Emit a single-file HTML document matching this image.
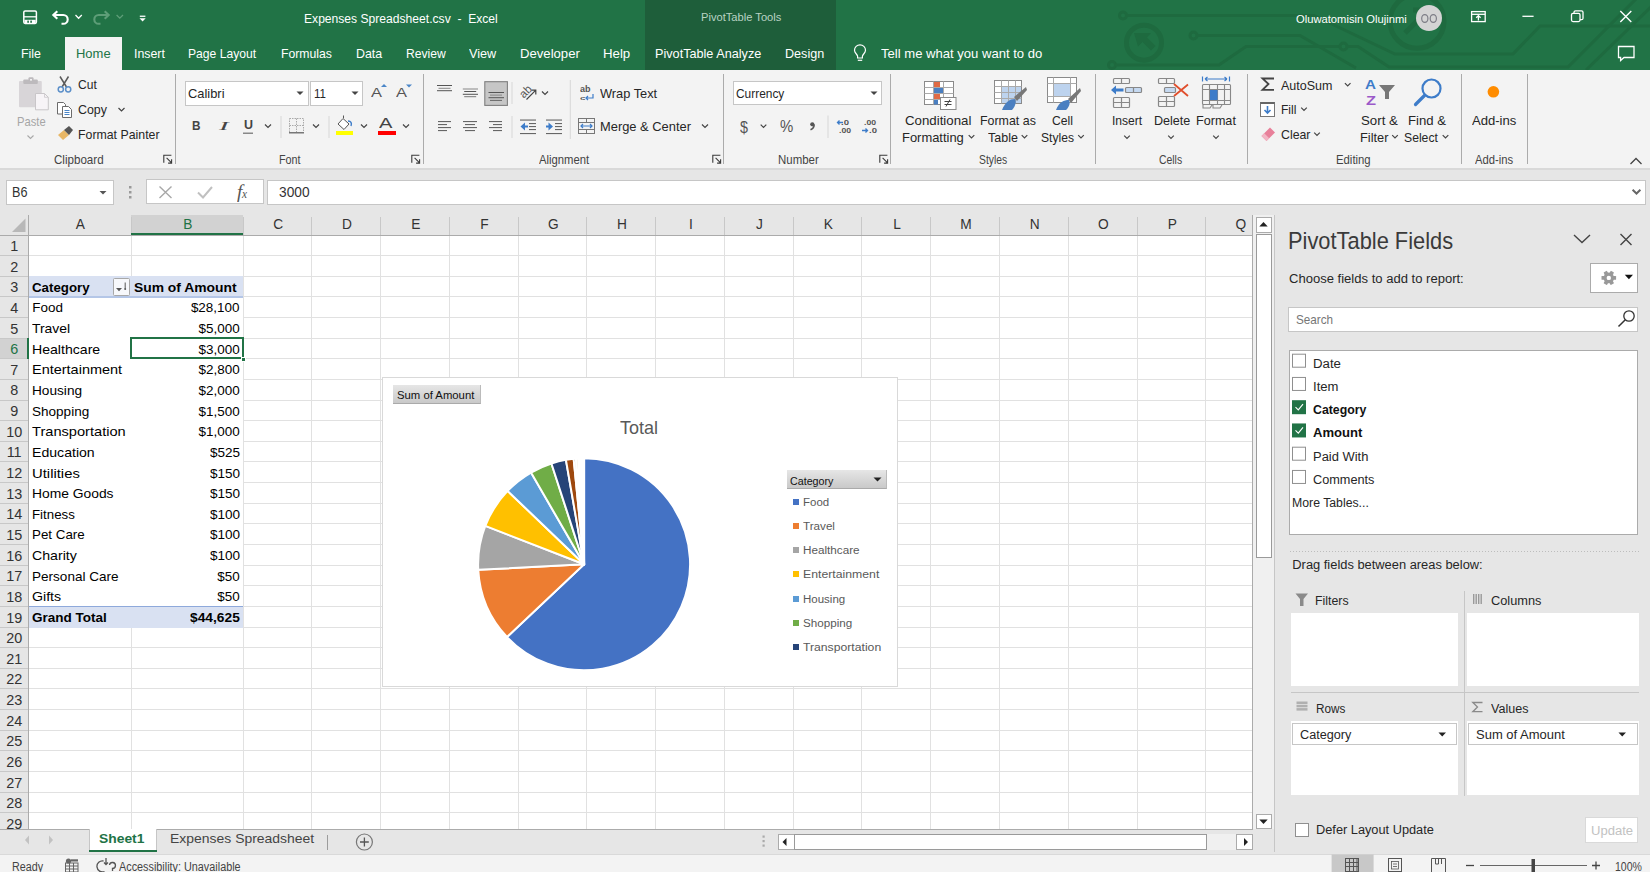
<!DOCTYPE html><html><head><meta charset="utf-8"><title>Excel</title><style>
html,body{margin:0;padding:0;}
body{width:1650px;height:872px;overflow:hidden;position:relative;background:#fff;font-family:"Liberation Sans",sans-serif;}
.t{position:absolute;white-space:pre;line-height:20px;height:20px;transform-origin:0 50%;font-family:"Liberation Sans",sans-serif;}
.r{position:absolute;display:block;}
</style></head><body><div class="r" style="left:0.00px;top:0.00px;width:1650.00px;height:70.00px;background:#217346;"></div><svg class="r" style="left:1080px;top:0px;" width="570" height="70" viewBox="0 0 570 70">
<g fill="none" stroke="#1e6a3f" stroke-width="3">
<circle cx="43" cy="15.5" r="3.5"/>
<path d="M46.5 15.5 H234 L315 54 H433 L460 26 H572"/>
<circle cx="64" cy="42.7" r="17.5" stroke-width="5"/>
<circle cx="113.5" cy="35.5" r="3.5"/>
<path d="M117 35.5 H220 L276 68"/>
<circle cx="32" cy="65" r="3.5"/>
<path d="M35.5 65 H139 L166 46.5 H260"/>
<circle cx="263.5" cy="46.5" r="3.5"/>
<path d="M267 46.5 H278 L309 67 H488 L556 -1"/>
<circle cx="337" cy="21.3" r="27" stroke-width="5"/>
<path d="M325 33 L346 12 M333 10 H348 V25" stroke-width="5"/>
<path d="M506 70 L572 6"/>
</g>
<g fill="#1e6a3f"><path d="M54 33 L71 33 L67 37.5 L75.5 46 L71 50.5 L62.5 42 L58 46.5 Z"/></g>
</svg><div class="r" style="left:645.00px;top:0.00px;width:191.00px;height:70.00px;background:#1e5e3a;"></div><div class="t" style="left:700.70px;top:6.90px;font-size:10.97px;color:#b9d3c3;transform:scaleX(1.016);">PivotTable Tools</div><svg class="r" style="left:0px;top:0px;" width="200" height="40" viewBox="0 0 200 40">
<rect x="23.8" y="11" width="12.6" height="12.4" rx="1.3" fill="none" stroke="#fff" stroke-width="1.5"/>
<path d="M24 16.8 H36.2" stroke="#fff" stroke-width="1.3"/>
<rect x="24.5" y="19.8" width="11.2" height="3.6" fill="#fff"/>
<rect x="27.3" y="20.6" width="1.6" height="2.2" fill="#217346"/><rect x="30.3" y="20.6" width="1.6" height="2.2" fill="#217346"/>
<g fill="none" stroke="#fff" stroke-width="2.1">
<path d="M53.5 15 H63.3 A4.4 4.4 0 0 1 63.3 23.8 H61.5"/>
<path d="M57.3 11.2 L53.3 15 L57.3 18.8"/>
</g>
<path d="M75.5 15 L78.6 18.2 L81.8 15" fill="none" stroke="#fff" stroke-width="1.3"/>
<g fill="none" stroke="#5e9e78" stroke-width="2.1">
<path d="M108.5 15 H98.7 A4.4 4.4 0 0 0 98.7 23.8 H100.5"/>
<path d="M104.7 11.2 L108.7 15 L104.7 18.8"/>
</g>
<path d="M116.6 15 L119.8 18.2 L123 15" fill="none" stroke="#5e9e78" stroke-width="1.3"/>
<rect x="139.8" y="15.6" width="5.6" height="1.3" fill="#fff"/>
<path d="M139.5 18.3 H145.7 L142.6 21.6 Z" fill="#fff"/>
</svg><div class="t" style="left:304.20px;top:9.03px;font-size:13.03px;color:#ffffff;transform:scaleX(0.930);">Expenses Spreadsheet.csv  -  Excel</div><div class="t" style="left:1296.00px;top:8.91px;font-size:11.52px;color:#ffffff;transform:scaleX(0.973);">Oluwatomisin Olujinmi</div><svg class="r" style="left:1416px;top:5px;" width="26" height="26" viewBox="0 0 26 26"><circle cx="13" cy="13" r="13" fill="#d4d4d4"/>
<g fill="none" stroke="#7d7d86" stroke-width="1.2"><ellipse cx="8.8" cy="13.5" rx="3.1" ry="3.9"/><ellipse cx="17.3" cy="13.5" rx="3.1" ry="3.9"/></g></svg><svg class="r" style="left:0px;top:0px;" width="1650" height="70" viewBox="0 0 1650 70"><g fill="none" stroke="#fff" stroke-width="1.3">
<rect x="1471.6" y="11.6" width="13.6" height="10"/>
<path d="M1471.6 14.3 H1485.2"/>
<path d="M1478.4 20.5 V15.7 M1476.2 17.8 L1478.4 15.6 L1480.6 17.8"/>
<path d="M1522.4 16.3 H1533.6"/>
<rect x="1571.5" y="13.3" width="8.5" height="8.3" rx="1.5"/>
<path d="M1574 13.3 V12.3 A1.5 1.5 0 0 1 1575.5 10.8 H1581.5 A1.5 1.5 0 0 1 1583 12.3 V18.2 A1.5 1.5 0 0 1 1581.5 19.7 H1580"/>
<path d="M1620.3 11 L1631.3 22 M1631.3 11 L1620.3 22" stroke-width="1.4"/>
<path d="M1618.5 46.5 H1634 V57.5 H1624 L1620.6 60.5 V57.5 H1618.5 Z"/>
</g></svg><div class="r" style="left:65.00px;top:37.00px;width:57.00px;height:33.00px;background:#f3f3f3;"></div><div class="t" style="left:21.30px;top:43.83px;font-size:12.76px;color:#ffffff;transform:scaleX(0.971);">File</div><div class="t" style="left:76.00px;top:43.83px;font-size:12.76px;color:#217346;transform:scaleX(1.018);">Home</div><div class="t" style="left:134.00px;top:43.83px;font-size:12.76px;color:#ffffff;transform:scaleX(0.969);">Insert</div><div class="t" style="left:188.30px;top:43.83px;font-size:12.76px;color:#ffffff;transform:scaleX(0.951);">Page Layout</div><div class="t" style="left:280.50px;top:43.83px;font-size:12.76px;color:#ffffff;transform:scaleX(0.959);">Formulas</div><div class="t" style="left:355.60px;top:43.83px;font-size:12.76px;color:#ffffff;transform:scaleX(0.974);">Data</div><div class="t" style="left:406.00px;top:43.83px;font-size:12.76px;color:#ffffff;transform:scaleX(0.952);">Review</div><div class="t" style="left:469.30px;top:43.83px;font-size:12.76px;color:#ffffff;transform:scaleX(0.993);">View</div><div class="t" style="left:520.00px;top:43.83px;font-size:12.76px;color:#ffffff;transform:scaleX(1.029);">Developer</div><div class="t" style="left:602.70px;top:43.83px;font-size:12.76px;color:#ffffff;transform:scaleX(1.038);">Help</div><div class="t" style="left:655.00px;top:43.83px;font-size:12.76px;color:#ffffff;transform:scaleX(0.993);">PivotTable Analyze</div><div class="t" style="left:785.00px;top:43.83px;font-size:12.76px;color:#ffffff;transform:scaleX(0.987);">Design</div><div class="t" style="left:880.70px;top:43.83px;font-size:12.76px;color:#ffffff;transform:scaleX(1.025);">Tell me what you want to do</div><svg class="r" style="left:0px;top:0px;" width="900" height="70" viewBox="0 0 900 70"><g fill="none" stroke="#fff" stroke-width="1.2">
<path d="M857.6 58 V56.3 C857.6 54.6 854.5 53 854.5 50.3 A5.5 5.5 0 0 1 865.5 50.3 C865.5 53 862.4 54.6 862.4 56.3 V58 Z"/>
<path d="M857.8 60.3 H862.2"/></g></svg><div class="r" style="left:0.00px;top:70.00px;width:1650.00px;height:98.00px;background:#f3f3f3;"></div><div class="r" style="left:0.00px;top:168.00px;width:1650.00px;height:1.50px;background:#d9d9d9;"></div><div class="r" style="left:175.30px;top:74.00px;width:1.00px;height:89.50px;background:#ababab;"></div><div class="r" style="left:423.00px;top:74.00px;width:1.00px;height:89.50px;background:#ababab;"></div><div class="r" style="left:723.10px;top:74.00px;width:1.00px;height:89.50px;background:#ababab;"></div><div class="r" style="left:890.10px;top:74.00px;width:1.00px;height:89.50px;background:#ababab;"></div><div class="r" style="left:1095.10px;top:74.00px;width:1.00px;height:89.50px;background:#ababab;"></div><div class="r" style="left:1246.80px;top:74.00px;width:1.00px;height:89.50px;background:#ababab;"></div><div class="r" style="left:1461.10px;top:74.00px;width:1.00px;height:89.50px;background:#ababab;"></div><div class="r" style="left:1526.80px;top:74.00px;width:1.00px;height:89.50px;background:#ababab;"></div><div class="t" style="left:16.60px;top:111.73px;font-size:12.76px;color:#a6a6a6;transform:scaleX(0.878);">Paste</div><div class="t" style="left:77.60px;top:75.24px;font-size:13.17px;color:#262626;transform:scaleX(0.917);">Cut</div><div class="t" style="left:77.60px;top:100.04px;font-size:13.17px;color:#262626;transform:scaleX(0.942);">Copy</div><div class="t" style="left:77.80px;top:124.74px;font-size:13.17px;color:#262626;transform:scaleX(0.937);">Format Painter</div><div class="t" style="left:53.60px;top:149.62px;font-size:12.35px;color:#444444;transform:scaleX(0.939);">Clipboard</div><div class="r" style="left:185.30px;top:81.30px;width:123.40px;height:24.30px;background:#fff;border:1px solid #c6c6c6;box-sizing:border-box;"></div><div class="r" style="left:310.40px;top:81.30px;width:53.10px;height:24.30px;background:#fff;border:1px solid #c6c6c6;box-sizing:border-box;"></div><div class="t" style="left:187.80px;top:83.54px;font-size:13.17px;color:#262626;transform:scaleX(0.979);">Calibri</div><div class="t" style="left:313.70px;top:83.54px;font-size:13.17px;color:#262626;transform:scaleX(0.876);">11</div><div class="t" style="left:370.50px;top:82.73px;font-size:13.03px;color:#555;transform:scaleX(1.264);">A</div><div class="t" style="left:396.00px;top:83.23px;font-size:13.03px;color:#555;transform:scaleX(1.264);">A</div><div class="t" style="left:191.50px;top:116.23px;font-size:13.03px;color:#444;font-weight:bold;transform:scaleX(0.904);">B</div><div class="t" style="left:218.50px;top:116.24px;font-size:13.44px;color:#444;font-style:italic;transform:scaleX(2.162);font-family:'Liberation Serif',serif;">I</div><div class="t" style="left:243.50px;top:115.22px;font-size:12.35px;color:#444;font-weight:bold;transform:scaleX(1.011);">U</div><div class="t" style="left:378.50px;top:113.75px;font-size:13.72px;color:#444;transform:scaleX(1.467);">A</div><div class="t" style="left:279.25px;top:149.72px;font-size:12.35px;color:#444444;transform:scaleX(0.874);">Font</div><div class="t" style="left:580.00px;top:79.65px;font-size:8.23px;color:#555;transform:scaleX(1.099);font-weight:bold;">ab</div><div class="t" style="left:579.50px;top:87.61px;font-size:6.17px;color:#555;transform:scaleX(1.613);font-weight:bold;">c</div><div class="t" style="left:599.50px;top:83.74px;font-size:13.17px;color:#262626;transform:scaleX(0.973);">Wrap Text</div><div class="t" style="left:599.50px;top:116.54px;font-size:13.17px;color:#262626;transform:scaleX(0.979);">Merge &amp; Center</div><div class="t" style="left:539.00px;top:149.72px;font-size:12.35px;color:#444444;transform:scaleX(0.914);">Alignment</div><div class="r" style="left:732.60px;top:81.20px;width:149.40px;height:24.30px;background:#fff;border:1px solid #c6c6c6;box-sizing:border-box;"></div><div class="t" style="left:735.60px;top:83.54px;font-size:13.17px;color:#262626;transform:scaleX(0.905);">Currency</div><div class="t" style="left:740.30px;top:116.60px;font-size:16.46px;color:#555;transform:scaleX(0.870);">$</div><div class="t" style="left:780.00px;top:116.80px;font-size:16.74px;color:#555;transform:scaleX(0.892);">%</div><div class="t" style="left:840.50px;top:112.64px;font-size:7.54px;color:#555;transform:scaleX(1.270);font-weight:bold;">.0</div><div class="t" style="left:838.50px;top:120.64px;font-size:7.54px;color:#555;transform:scaleX(1.154);font-weight:bold;">.00</div><div class="t" style="left:864.00px;top:112.64px;font-size:7.54px;color:#555;transform:scaleX(1.154);font-weight:bold;">.00</div><div class="t" style="left:868.50px;top:120.64px;font-size:7.54px;color:#555;transform:scaleX(1.270);font-weight:bold;">.0</div><div class="t" style="left:777.75px;top:149.72px;font-size:12.35px;color:#444444;transform:scaleX(0.927);">Number</div><div class="t" style="left:905.00px;top:111.24px;font-size:13.17px;color:#262626;transform:scaleX(1.008);">Conditional</div><div class="t" style="left:901.50px;top:128.24px;font-size:13.17px;color:#262626;transform:scaleX(0.983);">Formatting</div><div class="t" style="left:980.00px;top:111.24px;font-size:13.17px;color:#262626;transform:scaleX(0.943);">Format as</div><div class="t" style="left:987.50px;top:128.24px;font-size:13.17px;color:#262626;transform:scaleX(0.949);">Table</div><div class="t" style="left:1052.00px;top:111.24px;font-size:13.17px;color:#262626;transform:scaleX(0.925);">Cell</div><div class="t" style="left:1040.50px;top:128.24px;font-size:13.17px;color:#262626;transform:scaleX(0.919);">Styles</div><div class="t" style="left:978.50px;top:149.72px;font-size:12.35px;color:#444444;transform:scaleX(0.836);">Styles</div><div class="t" style="left:1112.30px;top:111.24px;font-size:13.17px;color:#262626;transform:scaleX(0.918);">Insert</div><div class="t" style="left:1153.50px;top:111.24px;font-size:13.17px;color:#262626;transform:scaleX(0.955);">Delete</div><div class="t" style="left:1196.00px;top:111.24px;font-size:13.17px;color:#262626;transform:scaleX(0.957);">Format</div><div class="t" style="left:1159.20px;top:149.72px;font-size:12.35px;color:#444444;transform:scaleX(0.842);">Cells</div><div class="t" style="left:1280.70px;top:75.54px;font-size:13.17px;color:#262626;transform:scaleX(0.950);">AutoSum</div><div class="t" style="left:1280.70px;top:100.04px;font-size:13.17px;color:#262626;transform:scaleX(0.917);">Fill</div><div class="t" style="left:1280.70px;top:124.74px;font-size:13.17px;color:#262626;transform:scaleX(0.937);">Clear</div><div class="t" style="left:1365.00px;top:74.74px;font-size:13.44px;color:#3d7cc9;font-weight:bold;transform:scaleX(1.134);">A</div><div class="t" style="left:1365.50px;top:91.24px;font-size:13.44px;color:#9b59c9;font-weight:bold;transform:scaleX(1.220);">Z</div><div class="t" style="left:1361.00px;top:111.24px;font-size:13.17px;color:#262626;transform:scaleX(1.008);">Sort &amp;</div><div class="t" style="left:1359.50px;top:128.24px;font-size:13.17px;color:#262626;transform:scaleX(0.973);">Filter</div><div class="t" style="left:1408.00px;top:111.24px;font-size:13.17px;color:#262626;">Find &amp;</div><div class="t" style="left:1404.00px;top:128.24px;font-size:13.17px;color:#262626;transform:scaleX(0.926);">Select</div><div class="t" style="left:1335.75px;top:149.72px;font-size:12.35px;color:#444444;transform:scaleX(0.918);">Editing</div><div class="t" style="left:1472.00px;top:111.24px;font-size:13.17px;color:#262626;transform:scaleX(0.993);">Add-ins</div><div class="t" style="left:1475.00px;top:149.72px;font-size:12.35px;color:#444444;transform:scaleX(0.911);">Add-ins</div><svg class="r" style="left:0px;top:0px;" width="1650" height="172" viewBox="0 0 1650 172"><g>
<rect x="19" y="81" width="22.8" height="26.3" rx="1" fill="#d8d5d8"/>
<rect x="23.3" y="79.5" width="14.5" height="4.5" rx="1" fill="#bdbabd"/>
<rect x="28.5" y="77.2" width="5" height="4" rx="1" fill="#bdbabd"/><rect x="30" y="79" width="2" height="1.6" fill="#f3f3f3"/>
<path d="M35.5 93.5 H44.5 L48.3 97.3 V109.8 H35.5 Z" fill="#f7f4f7" stroke="#c9c6c9" stroke-width="1"/>
<path d="M44.5 93.5 V97.3 H48.3" fill="none" stroke="#c9c6c9" stroke-width="0.8"/>
</g><path d="M27.5 135.5 L30.5 138.5 L33.5 135.5" fill="none" stroke="#a8a8a8" stroke-width="1.1"/><g fill="none" stroke="#5a5a5a" stroke-width="1.5"><path d="M60 76.5 L66.5 87 M68.5 76.5 L62 87"/></g>
<g fill="none" stroke="#5b8fc9" stroke-width="1.5"><circle cx="60.8" cy="89.3" r="2.6"/><circle cx="68.2" cy="89.3" r="2.6"/></g><g fill="#fff" stroke="#6b6b6b" stroke-width="1"><path d="M57.5 102.5 H63.5 L65.5 104.5 V114 H57.5 Z"/>
<path d="M62.5 106.5 H68.5 L71.5 109.5 V117.5 H62.5 Z"/></g>
<g stroke="#4a86c8" stroke-width="1"><path d="M64.5 110.5 H69.5 M64.5 112.5 H69.5 M64.5 114.5 H69.5"/></g><path d="M118.5 108.0 L121.5 111.0 L124.5 108.0" fill="none" stroke="#444" stroke-width="1.2"/><path d="M58 135 L64 130 L69 135 L63 140 Z" fill="#e8b766"/>
<path d="M64 130 L69 126 L73 130 L69 135 Z" fill="#555"/><g fill="none" stroke="#3a3a3a" stroke-width="1.1"><path d="M163.79999999999998 162.8 V155.3 H171.4"/><path d="M166.6 157.8 L171.6 162.8 M171.6 159.3 V163.10000000000002 H168.1"/></g><g fill="none" stroke="#3a3a3a" stroke-width="1.1"><path d="M411.8 162.8 V155.3 H419.40000000000003"/><path d="M414.6 157.8 L419.6 162.8 M419.6 159.3 V163.10000000000002 H416.1"/></g><g fill="none" stroke="#3a3a3a" stroke-width="1.1"><path d="M712.8000000000001 162.8 V155.3 H720.4"/><path d="M715.6 157.8 L720.6 162.8 M720.6 159.3 V163.10000000000002 H717.1"/></g><g fill="none" stroke="#3a3a3a" stroke-width="1.1"><path d="M879.8000000000001 162.8 V155.3 H887.4"/><path d="M882.6 157.8 L887.6 162.8 M887.6 159.3 V163.10000000000002 H884.1"/></g><path d="M296.5 91.5 H303.5 L300 95 Z" fill="#444"/><path d="M351.5 91.5 H358.5 L355 95 Z" fill="#444"/><path d="M381 87 L384 84 L387 87 Z" fill="#4a86c8"/><path d="M406 84.5 H412 L409 87.5 Z" fill="#4a86c8"/><rect x="243" y="132.5" width="10" height="1.5" fill="#888"/><path d="M265 124.5 L268 127.5 L271 124.5" fill="none" stroke="#444" stroke-width="1.2"/><rect x="280.5" y="116" width="1" height="22" fill="#d8d8d8"/><rect x="328.5" y="116" width="1" height="22" fill="#d8d8d8"/><g fill="none" stroke="#aaa" stroke-width="1" stroke-dasharray="1.5 1"><rect x="289.5" y="118.5" width="14" height="14"/><path d="M296.5 118.5 V132.5 M289.5 125.5 H303.5"/></g><rect x="289" y="132" width="15" height="1.5" fill="#777"/><path d="M313 124.5 L316 127.5 L319 124.5" fill="none" stroke="#444" stroke-width="1.2"/><path d="M338 124 L343 118.5 L349 124 L344 129.5 Z" fill="#fff" stroke="#555" stroke-width="1"/><path d="M343.5 118 V115.5" stroke="#555" stroke-width="1"/><path d="M348 121 C351 121 352 123 351 126" fill="none" stroke="#3d7cc9" stroke-width="1.4"/><rect x="336" y="131" width="17" height="4" fill="#ffff00"/><path d="M361 124.5 L364 127.5 L367 124.5" fill="none" stroke="#444" stroke-width="1.2"/><rect x="378" y="131" width="18" height="4" fill="#ff0000"/><path d="M403 124.5 L406 127.5 L409 124.5" fill="none" stroke="#444" stroke-width="1.2"/><rect x="437" y="85" width="15" height="1" fill="#555"/><rect x="438.5" y="87.8" width="12.0" height="1" fill="#888"/><rect x="437" y="90.2" width="15" height="1" fill="#555"/><rect x="462.8" y="88.5" width="15.199999999999989" height="1" fill="#888"/><rect x="464.2" y="91" width="12.0" height="1" fill="#555"/><rect x="462.8" y="93.8" width="15.199999999999989" height="1" fill="#555"/><rect x="464.2" y="96.2" width="12.0" height="1" fill="#777"/><rect x="484.8" y="81.7" width="22.6" height="23.7" fill="#c6c6c6" stroke="#7f7f7f" stroke-width="1.1"/><rect x="488.5" y="92" width="15.5" height="1" fill="#555"/><rect x="490" y="94.6" width="12" height="1" fill="#888"/><rect x="488.5" y="97.2" width="15.5" height="1" fill="#555"/><rect x="490" y="99.9" width="12" height="1" fill="#666"/><rect x="511.5" y="82" width="1" height="22" fill="#d8d8d8"/><rect x="511.5" y="116" width="1" height="22" fill="#d8d8d8"/><text x="525.5" y="95.5" text-anchor="middle" font-family="Liberation Sans" font-size="11.5" fill="#555" transform="rotate(-45 525.5 91.5)">ab</text><path d="M526.5 99.5 L535.8 90.2 M531.5 90.2 H535.8 V94.5" fill="none" stroke="#444" stroke-width="1.2"/><path d="M542 91.5 L545 94.5 L548 91.5" fill="none" stroke="#444" stroke-width="1.2"/><rect x="438" y="121" width="13" height="1.1" fill="#666"/><rect x="438" y="124" width="9" height="1.1" fill="#666"/><rect x="438" y="127" width="13" height="1.1" fill="#666"/><rect x="438" y="130" width="9" height="1.1" fill="#666"/><rect x="463" y="121" width="14" height="1.1" fill="#666"/><rect x="465" y="124" width="10" height="1.1" fill="#666"/><rect x="463" y="127" width="14" height="1.1" fill="#666"/><rect x="465" y="130" width="10" height="1.1" fill="#666"/><rect x="489" y="121" width="13" height="1.1" fill="#666"/><rect x="493" y="124" width="9" height="1.1" fill="#666"/><rect x="489" y="127" width="13" height="1.1" fill="#666"/><rect x="493" y="130" width="9" height="1.1" fill="#666"/><rect x="520" y="119.5" width="16" height="1.1" fill="#666"/><rect x="520" y="133" width="16" height="1.1" fill="#666"/><rect x="529" y="123" width="7" height="1.1" fill="#666"/><rect x="529" y="126" width="7" height="1.1" fill="#666"/><rect x="529" y="129" width="7" height="1.1" fill="#666"/><path d="M520.5 126.5 L525 122.5 V125.5 H528 V127.5 H525 V130.5 Z" fill="#3d7cc9"/><rect x="546" y="119.5" width="16" height="1.1" fill="#666"/><rect x="546" y="133" width="16" height="1.1" fill="#666"/><rect x="555" y="123" width="7" height="1.1" fill="#666"/><rect x="555" y="126" width="7" height="1.1" fill="#666"/><rect x="555" y="129" width="7" height="1.1" fill="#666"/><path d="M553 126.5 L548.5 122.5 V125.5 H546 V127.5 H548.5 V130.5 Z" fill="#3d7cc9"/><rect x="569.8" y="80" width="1" height="59" fill="#d8d8d8"/><path d="M593 94 V98 H586 M588 96 L586 98 L588 100" fill="none" stroke="#3d7cc9" stroke-width="1.2"/><g fill="none" stroke="#777" stroke-width="1"><rect x="578.5" y="118.5" width="16" height="15"/><path d="M578.5 122.5 H594.5 M578.5 129.5 H594.5 M586.5 118.5 V122.5 M586.5 129.5 V133.5"/></g><path d="M581 126 H592 M583 124 L581 126 L583 128 M590 124 L592 126 L590 128" fill="none" stroke="#3d7cc9" stroke-width="1.2"/><path d="M702 124.5 L705 127.5 L708 124.5" fill="none" stroke="#444" stroke-width="1.2"/><path d="M870.5 91.5 H877.5 L874 95 Z" fill="#444"/><path d="M760.7 124.6 L763.5 127.4 L766.3 124.6" fill="none" stroke="#444" stroke-width="1.2"/><circle cx="812.3" cy="124.3" r="2.1" fill="#555"/><path d="M814.2 124.5 C814.2 127 812.5 129 810.5 129.8" fill="none" stroke="#555" stroke-width="1.5"/><rect x="827.5" y="115.5" width="1" height="22.5" fill="#d8d8d8"/><path d="M843 122.5 H837.5 M839.5 120.5 L837.5 122.5 L839.5 124.5" fill="none" stroke="#3d7cc9" stroke-width="1.3"/><path d="M862 130.5 H867.5 M865.5 128.5 L867.5 130.5 L865.5 132.5" fill="none" stroke="#3d7cc9" stroke-width="1.3"/><g><rect x="924.5" y="81.5" width="29" height="23" fill="#fff" stroke="#8a8a8a" stroke-width="1"/>
<path d="M924.5 87.5 H953.5 M924.5 93.5 H953.5 M924.5 99.5 H953.5 M933.5 81.5 V104.5 M943.5 81.5 V104.5" stroke="#aaa" stroke-width="1"/>
<rect x="934" y="82" width="6" height="5" fill="#e06b45"/><rect x="934" y="88" width="9" height="5" fill="#4a7fc1"/>
<rect x="934" y="94" width="6" height="5" fill="#e06b45"/><rect x="934" y="100" width="4" height="4.5" fill="#4a7fc1"/>
<rect x="940.5" y="97.5" width="15.5" height="12" fill="#fff" stroke="#8a8a8a" stroke-width="1"/>
<path d="M944.5 101.5 H951.5 M944.5 104.5 H951.5 M950 99.5 L946 106.5" stroke="#444" stroke-width="1"/></g><path d="M968.7 135.1 L971.5 137.9 L974.3 135.1" fill="none" stroke="#444" stroke-width="1.2"/><g><rect x="994.5" y="80.5" width="27" height="23" fill="#fff" stroke="#8a8a8a" stroke-width="1"/>
<rect x="1002" y="87" width="19" height="16" fill="#bdd3ee"/>
<path d="M994.5 86.5 H1021.5 M994.5 92.5 H1021.5 M994.5 98.5 H1021.5 M1001.5 80.5 V103.5 M1008.5 80.5 V103.5 M1015.5 80.5 V103.5" stroke="#aaa" stroke-width="1"/>
<path d="M1014 97 L1026 87 L1027 90 L1017 101 Z" fill="#777"/>
<path d="M1002 110 C1005 102 1010 99 1015 99 C1017 103 1014 108 1012 110 Z" fill="#4a7fc1"/></g><path d="M1021.7 135.1 L1024.5 137.9 L1027.3 135.1" fill="none" stroke="#444" stroke-width="1.2"/><g><rect x="1047.5" y="77.5" width="29" height="25" fill="#fff" stroke="#8a8a8a" stroke-width="1"/>
<path d="M1047.5 83.5 H1076.5 M1047.5 96.5 H1076.5 M1053.5 77.5 V102.5 M1070.5 77.5 V102.5" stroke="#aaa" stroke-width="1"/>
<rect x="1054" y="84" width="16" height="12" fill="#bdd3ee"/>
<path d="M1068 99 L1080 88 L1081 91 L1071 103 Z" fill="#777"/>
<path d="M1056 110 C1059 102 1064 100 1069 100 C1071 104 1068 108 1066 110 Z" fill="#4a7fc1"/></g><path d="M1078.2 135.1 L1081 137.9 L1083.8 135.1" fill="none" stroke="#444" stroke-width="1.2"/><g fill="none" stroke="#888" stroke-width="1.2">
<rect x="1113.5" y="78.5" width="16" height="5" rx="1"/><path d="M1121.5 78.5 V83.5"/>
<rect x="1113.5" y="97.5" width="16" height="10" rx="1"/><path d="M1121.5 97.5 V107.5 M1113.5 102.5 H1129.5"/>
<rect x="1125.5" y="87.5" width="16" height="5" rx="1" fill="#c5d9f1"/><path d="M1133.5 87.5 V92.5"/></g>
<path d="M1111 90 L1116 85.5 V88.5 H1123.5 V91.5 H1116 V94.5 Z" fill="#3d7cc9"/><g fill="none" stroke="#888" stroke-width="1.2">
<rect x="1158.5" y="78.5" width="16" height="5" rx="1"/><path d="M1166.5 78.5 V83.5"/>
<rect x="1158.5" y="96.5" width="16" height="10" rx="1"/><path d="M1166.5 96.5 V106.5 M1158.5 101.5 H1174.5"/>
<rect x="1164.5" y="87.5" width="11" height="5" rx="1" fill="#c5d9f1"/></g>
<path d="M1174 84 L1188 96 M1188 84.5 L1174 96" stroke="#e04e2c" stroke-width="1.8"/><g fill="none" stroke="#888" stroke-width="1.1">
<rect x="1202.5" y="84.5" width="28" height="20" rx="1"/><path d="M1202.5 89.5 H1230.5 M1202.5 100.5 H1230.5 M1209.5 84.5 V104.5 M1217.5 84.5 V104.5 M1224.5 84.5 V104.5"/>
<path d="M1203 104.5 V108 H1210 L1212 105 M1213 105 V108 H1220 L1222 105"/></g>
<rect x="1210" y="90" width="7.5" height="10" fill="#3d7cc9"/>
<path d="M1205 79 H1227 M1205 79 L1207.5 77 M1205 79 L1207.5 81 M1227 79 L1224.5 77 M1227 79 L1224.5 81 M1202.5 76.5 V81.5 M1229.5 76.5 V81.5" fill="none" stroke="#3d7cc9" stroke-width="1.2"/><path d="M1124.2 135.6 L1127 138.4 L1129.8 135.6" fill="none" stroke="#444" stroke-width="1.2"/><path d="M1168.2 135.6 L1171 138.4 L1173.8 135.6" fill="none" stroke="#444" stroke-width="1.2"/><path d="M1213.2 135.6 L1216 138.4 L1218.8 135.6" fill="none" stroke="#444" stroke-width="1.2"/><path d="M1274 78.5 H1262.5 L1268.5 84 L1262.5 89.8 H1274" fill="none" stroke="#444" stroke-width="1.8"/><path d="M1344.9 83.1 L1347.7 85.9 L1350.5 83.1" fill="none" stroke="#444" stroke-width="1.2"/><rect x="1260.5" y="102.5" width="14" height="14" fill="#fff" stroke="#777" stroke-width="1"/><rect x="1260.5" y="102" width="14" height="2" fill="#666"/><path d="M1267.5 106 V113 M1264.5 110 L1267.5 113 L1270.5 110" fill="none" stroke="#3d7cc9" stroke-width="1.6"/><path d="M1301.2 107.6 L1304 110.4 L1306.8 107.6" fill="none" stroke="#444" stroke-width="1.2"/><path d="M1261.5 136 L1270 127.5 L1275 132.5 L1266.5 141 Z" fill="#e8809a"/><path d="M1261.5 136 L1264.2 133.3 L1269.2 138.3 L1266.5 141 Z" fill="#f2b5c4"/><path d="M1314.2 132.6 L1317 135.4 L1319.8 132.6" fill="none" stroke="#444" stroke-width="1.2"/><path d="M1379 85 H1395 L1389 92 V99 H1385 V92 Z" fill="#777"/><circle cx="1431.5" cy="88.5" r="9" fill="none" stroke="#3d7cc9" stroke-width="2.2"/><path d="M1424.5 95.5 L1415.5 104.5" stroke="#3d7cc9" stroke-width="3.2" stroke-linecap="round"/><path d="M1392.2 135.1 L1395 137.9 L1397.8 135.1" fill="none" stroke="#444" stroke-width="1.2"/><path d="M1442.7 135.1 L1445.5 137.9 L1448.3 135.1" fill="none" stroke="#444" stroke-width="1.2"/><circle cx="1493.4" cy="91.8" r="5.8" fill="#ff8c00"/><path d="M1630.5 164 L1636 158.5 L1641.5 164" fill="none" stroke="#444" stroke-width="1.3"/></svg><div class="r" style="left:0.00px;top:169.50px;width:1650.00px;height:45.50px;background:#e6e6e6;"></div><div class="r" style="left:5.50px;top:179.50px;width:108.50px;height:25.00px;background:#fff;border:1px solid #c6c6c6;box-sizing:border-box;"></div><div class="t" style="left:11.60px;top:182.55px;font-size:13.72px;color:#333;transform:scaleX(0.923);">B6</div><div class="r" style="left:146.30px;top:179.30px;width:117.30px;height:25.20px;background:#fff;border:1px solid #c6c6c6;box-sizing:border-box;"></div><div class="r" style="left:266.50px;top:179.50px;width:1379.50px;height:25.00px;background:#fff;border:1px solid #c6c6c6;box-sizing:border-box;"></div><svg class="r" style="left:0px;top:170px;" width="1650" height="45" viewBox="0 0 1650 45"><path d="M99.5 21 H106.5 L103 24.5 Z" fill="#555"/>
<g fill="#999"><rect x="129" y="16" width="2.5" height="2.5"/><rect x="129" y="21" width="2.5" height="2.5"/><rect x="129" y="26" width="2.5" height="2.5"/></g>
<path d="M159.5 16.5 L171.5 28 M171.5 16.5 L159.5 28" stroke="#a8a8a8" stroke-width="1.4"/>
<path d="M198 22.5 L203 27.5 L212 17" fill="none" stroke="#c0c0c0" stroke-width="2"/>
<path d="M1632.6 19.8 L1636.5 23.5 L1640.4 19.8" fill="none" stroke="#666" stroke-width="2"/></svg><div class="t" style="left:236.50px;top:181.82px;font-size:17.83px;color:#555;font-style:italic;transform:scaleX(1.077);font-family:'Liberation Serif',serif;">f</div><div class="t" style="left:242.46px;top:184.02px;font-size:12.35px;color:#555;font-style:italic;transform:scaleX(0.915);font-family:'Liberation Serif',serif;">x</div><div class="t" style="left:279.00px;top:182.55px;font-size:13.72px;color:#333;">3000</div><div class="r" style="left:0.00px;top:215.00px;width:1253.00px;height:614.00px;background:#ffffff;"></div><div class="r" style="left:0.00px;top:215.00px;width:1253.00px;height:20.00px;background:#e6e6e6;"></div><div class="r" style="left:0.00px;top:215.00px;width:28.00px;height:614.00px;background:#e6e6e6;"></div><div class="r" style="left:131.00px;top:215.00px;width:112.00px;height:20.00px;background:#d2d2d2;"></div><div class="r" style="left:0.00px;top:338.10px;width:28.00px;height:20.64px;background:#d2d2d2;"></div><div class="r" style="left:130.50px;top:235.00px;width:1.00px;height:594.00px;background:#e1e1e1;"></div><div class="r" style="left:130.50px;top:217.00px;width:1.00px;height:18.00px;background:#c8c8c8;"></div><div class="r" style="left:242.50px;top:235.00px;width:1.00px;height:594.00px;background:#e1e1e1;"></div><div class="r" style="left:242.50px;top:217.00px;width:1.00px;height:18.00px;background:#c8c8c8;"></div><div class="r" style="left:311.27px;top:235.00px;width:1.00px;height:594.00px;background:#e1e1e1;"></div><div class="r" style="left:311.27px;top:217.00px;width:1.00px;height:18.00px;background:#c8c8c8;"></div><div class="r" style="left:380.04px;top:235.00px;width:1.00px;height:594.00px;background:#e1e1e1;"></div><div class="r" style="left:380.04px;top:217.00px;width:1.00px;height:18.00px;background:#c8c8c8;"></div><div class="r" style="left:448.81px;top:235.00px;width:1.00px;height:594.00px;background:#e1e1e1;"></div><div class="r" style="left:448.81px;top:217.00px;width:1.00px;height:18.00px;background:#c8c8c8;"></div><div class="r" style="left:517.58px;top:235.00px;width:1.00px;height:594.00px;background:#e1e1e1;"></div><div class="r" style="left:517.58px;top:217.00px;width:1.00px;height:18.00px;background:#c8c8c8;"></div><div class="r" style="left:586.35px;top:235.00px;width:1.00px;height:594.00px;background:#e1e1e1;"></div><div class="r" style="left:586.35px;top:217.00px;width:1.00px;height:18.00px;background:#c8c8c8;"></div><div class="r" style="left:655.12px;top:235.00px;width:1.00px;height:594.00px;background:#e1e1e1;"></div><div class="r" style="left:655.12px;top:217.00px;width:1.00px;height:18.00px;background:#c8c8c8;"></div><div class="r" style="left:723.89px;top:235.00px;width:1.00px;height:594.00px;background:#e1e1e1;"></div><div class="r" style="left:723.89px;top:217.00px;width:1.00px;height:18.00px;background:#c8c8c8;"></div><div class="r" style="left:792.66px;top:235.00px;width:1.00px;height:594.00px;background:#e1e1e1;"></div><div class="r" style="left:792.66px;top:217.00px;width:1.00px;height:18.00px;background:#c8c8c8;"></div><div class="r" style="left:861.43px;top:235.00px;width:1.00px;height:594.00px;background:#e1e1e1;"></div><div class="r" style="left:861.43px;top:217.00px;width:1.00px;height:18.00px;background:#c8c8c8;"></div><div class="r" style="left:930.20px;top:235.00px;width:1.00px;height:594.00px;background:#e1e1e1;"></div><div class="r" style="left:930.20px;top:217.00px;width:1.00px;height:18.00px;background:#c8c8c8;"></div><div class="r" style="left:998.97px;top:235.00px;width:1.00px;height:594.00px;background:#e1e1e1;"></div><div class="r" style="left:998.97px;top:217.00px;width:1.00px;height:18.00px;background:#c8c8c8;"></div><div class="r" style="left:1067.74px;top:235.00px;width:1.00px;height:594.00px;background:#e1e1e1;"></div><div class="r" style="left:1067.74px;top:217.00px;width:1.00px;height:18.00px;background:#c8c8c8;"></div><div class="r" style="left:1136.51px;top:235.00px;width:1.00px;height:594.00px;background:#e1e1e1;"></div><div class="r" style="left:1136.51px;top:217.00px;width:1.00px;height:18.00px;background:#c8c8c8;"></div><div class="r" style="left:1205.28px;top:235.00px;width:1.00px;height:594.00px;background:#e1e1e1;"></div><div class="r" style="left:1205.28px;top:217.00px;width:1.00px;height:18.00px;background:#c8c8c8;"></div><div class="r" style="left:28.00px;top:255.04px;width:1224.00px;height:1.00px;background:#e1e1e1;"></div><div class="r" style="left:0.00px;top:255.04px;width:28.00px;height:1.00px;background:#c8c8c8;"></div><div class="r" style="left:28.00px;top:275.68px;width:1224.00px;height:1.00px;background:#e1e1e1;"></div><div class="r" style="left:0.00px;top:275.68px;width:28.00px;height:1.00px;background:#c8c8c8;"></div><div class="r" style="left:28.00px;top:296.32px;width:1224.00px;height:1.00px;background:#e1e1e1;"></div><div class="r" style="left:0.00px;top:296.32px;width:28.00px;height:1.00px;background:#c8c8c8;"></div><div class="r" style="left:28.00px;top:316.96px;width:1224.00px;height:1.00px;background:#e1e1e1;"></div><div class="r" style="left:0.00px;top:316.96px;width:28.00px;height:1.00px;background:#c8c8c8;"></div><div class="r" style="left:28.00px;top:337.60px;width:1224.00px;height:1.00px;background:#e1e1e1;"></div><div class="r" style="left:0.00px;top:337.60px;width:28.00px;height:1.00px;background:#c8c8c8;"></div><div class="r" style="left:28.00px;top:358.24px;width:1224.00px;height:1.00px;background:#e1e1e1;"></div><div class="r" style="left:0.00px;top:358.24px;width:28.00px;height:1.00px;background:#c8c8c8;"></div><div class="r" style="left:28.00px;top:378.88px;width:1224.00px;height:1.00px;background:#e1e1e1;"></div><div class="r" style="left:0.00px;top:378.88px;width:28.00px;height:1.00px;background:#c8c8c8;"></div><div class="r" style="left:28.00px;top:399.52px;width:1224.00px;height:1.00px;background:#e1e1e1;"></div><div class="r" style="left:0.00px;top:399.52px;width:28.00px;height:1.00px;background:#c8c8c8;"></div><div class="r" style="left:28.00px;top:420.16px;width:1224.00px;height:1.00px;background:#e1e1e1;"></div><div class="r" style="left:0.00px;top:420.16px;width:28.00px;height:1.00px;background:#c8c8c8;"></div><div class="r" style="left:28.00px;top:440.80px;width:1224.00px;height:1.00px;background:#e1e1e1;"></div><div class="r" style="left:0.00px;top:440.80px;width:28.00px;height:1.00px;background:#c8c8c8;"></div><div class="r" style="left:28.00px;top:461.44px;width:1224.00px;height:1.00px;background:#e1e1e1;"></div><div class="r" style="left:0.00px;top:461.44px;width:28.00px;height:1.00px;background:#c8c8c8;"></div><div class="r" style="left:28.00px;top:482.08px;width:1224.00px;height:1.00px;background:#e1e1e1;"></div><div class="r" style="left:0.00px;top:482.08px;width:28.00px;height:1.00px;background:#c8c8c8;"></div><div class="r" style="left:28.00px;top:502.72px;width:1224.00px;height:1.00px;background:#e1e1e1;"></div><div class="r" style="left:0.00px;top:502.72px;width:28.00px;height:1.00px;background:#c8c8c8;"></div><div class="r" style="left:28.00px;top:523.36px;width:1224.00px;height:1.00px;background:#e1e1e1;"></div><div class="r" style="left:0.00px;top:523.36px;width:28.00px;height:1.00px;background:#c8c8c8;"></div><div class="r" style="left:28.00px;top:544.00px;width:1224.00px;height:1.00px;background:#e1e1e1;"></div><div class="r" style="left:0.00px;top:544.00px;width:28.00px;height:1.00px;background:#c8c8c8;"></div><div class="r" style="left:28.00px;top:564.64px;width:1224.00px;height:1.00px;background:#e1e1e1;"></div><div class="r" style="left:0.00px;top:564.64px;width:28.00px;height:1.00px;background:#c8c8c8;"></div><div class="r" style="left:28.00px;top:585.28px;width:1224.00px;height:1.00px;background:#e1e1e1;"></div><div class="r" style="left:0.00px;top:585.28px;width:28.00px;height:1.00px;background:#c8c8c8;"></div><div class="r" style="left:28.00px;top:605.92px;width:1224.00px;height:1.00px;background:#e1e1e1;"></div><div class="r" style="left:0.00px;top:605.92px;width:28.00px;height:1.00px;background:#c8c8c8;"></div><div class="r" style="left:28.00px;top:626.56px;width:1224.00px;height:1.00px;background:#e1e1e1;"></div><div class="r" style="left:0.00px;top:626.56px;width:28.00px;height:1.00px;background:#c8c8c8;"></div><div class="r" style="left:28.00px;top:647.20px;width:1224.00px;height:1.00px;background:#e1e1e1;"></div><div class="r" style="left:0.00px;top:647.20px;width:28.00px;height:1.00px;background:#c8c8c8;"></div><div class="r" style="left:28.00px;top:667.84px;width:1224.00px;height:1.00px;background:#e1e1e1;"></div><div class="r" style="left:0.00px;top:667.84px;width:28.00px;height:1.00px;background:#c8c8c8;"></div><div class="r" style="left:28.00px;top:688.48px;width:1224.00px;height:1.00px;background:#e1e1e1;"></div><div class="r" style="left:0.00px;top:688.48px;width:28.00px;height:1.00px;background:#c8c8c8;"></div><div class="r" style="left:28.00px;top:709.12px;width:1224.00px;height:1.00px;background:#e1e1e1;"></div><div class="r" style="left:0.00px;top:709.12px;width:28.00px;height:1.00px;background:#c8c8c8;"></div><div class="r" style="left:28.00px;top:729.76px;width:1224.00px;height:1.00px;background:#e1e1e1;"></div><div class="r" style="left:0.00px;top:729.76px;width:28.00px;height:1.00px;background:#c8c8c8;"></div><div class="r" style="left:28.00px;top:750.40px;width:1224.00px;height:1.00px;background:#e1e1e1;"></div><div class="r" style="left:0.00px;top:750.40px;width:28.00px;height:1.00px;background:#c8c8c8;"></div><div class="r" style="left:28.00px;top:771.04px;width:1224.00px;height:1.00px;background:#e1e1e1;"></div><div class="r" style="left:0.00px;top:771.04px;width:28.00px;height:1.00px;background:#c8c8c8;"></div><div class="r" style="left:28.00px;top:791.68px;width:1224.00px;height:1.00px;background:#e1e1e1;"></div><div class="r" style="left:0.00px;top:791.68px;width:28.00px;height:1.00px;background:#c8c8c8;"></div><div class="r" style="left:28.00px;top:812.32px;width:1224.00px;height:1.00px;background:#e1e1e1;"></div><div class="r" style="left:0.00px;top:812.32px;width:28.00px;height:1.00px;background:#c8c8c8;"></div><div class="r" style="left:0.00px;top:234.50px;width:1253.00px;height:1.00px;background:#ababab;"></div><div class="r" style="left:27.70px;top:215.00px;width:1.00px;height:614.00px;background:#ababab;"></div><div class="r" style="left:1252.00px;top:215.00px;width:1.00px;height:614.00px;background:#ababab;"></div><svg class="r" style="left:0px;top:215px;" width="28" height="20" viewBox="0 0 28 20"><path d="M25.5 3.5 V17 H12 Z" fill="#b8b8b8"/></svg><div class="r" style="left:131.00px;top:233.00px;width:112.00px;height:2.00px;background:#217346;"></div><div class="r" style="left:27.20px;top:338.10px;width:1.80px;height:20.64px;background:#217346;"></div><div class="t" style="left:75.70px;top:215.45px;font-size:13.72px;color:#333;">A</div><div class="t" style="left:183.25px;top:215.45px;font-size:13.72px;color:#217346;">B</div><div class="t" style="left:273.24px;top:215.45px;font-size:13.72px;color:#333;">C</div><div class="t" style="left:342.00px;top:215.45px;font-size:13.72px;color:#333;">D</div><div class="t" style="left:411.17px;top:215.45px;font-size:13.72px;color:#333;">E</div><div class="t" style="left:480.29px;top:215.45px;font-size:13.72px;color:#333;">F</div><div class="t" style="left:547.91px;top:215.45px;font-size:13.72px;color:#333;">G</div><div class="t" style="left:617.08px;top:215.45px;font-size:13.72px;color:#333;">H</div><div class="t" style="left:688.90px;top:215.45px;font-size:13.72px;color:#333;">I</div><div class="t" style="left:756.12px;top:215.45px;font-size:13.72px;color:#333;">J</div><div class="t" style="left:823.79px;top:215.45px;font-size:13.72px;color:#333;">K</div><div class="t" style="left:893.31px;top:215.45px;font-size:13.72px;color:#333;">L</div><div class="t" style="left:960.18px;top:215.45px;font-size:13.72px;color:#333;">M</div><div class="t" style="left:1029.70px;top:215.45px;font-size:13.72px;color:#333;">N</div><div class="t" style="left:1098.08px;top:215.45px;font-size:13.72px;color:#333;">O</div><div class="t" style="left:1167.64px;top:215.45px;font-size:13.72px;color:#333;">P</div><div class="t" style="left:1235.45px;top:215.45px;font-size:13.72px;color:#333;">Q</div><div class="t" style="left:10.20px;top:235.98px;font-size:14.40px;color:#333;">1</div><div class="t" style="left:10.20px;top:256.62px;font-size:14.40px;color:#333;">2</div><div class="t" style="left:10.20px;top:277.26px;font-size:14.40px;color:#333;">3</div><div class="t" style="left:10.20px;top:297.90px;font-size:14.40px;color:#333;">4</div><div class="t" style="left:10.20px;top:318.54px;font-size:14.40px;color:#333;">5</div><div class="t" style="left:10.20px;top:339.18px;font-size:14.40px;color:#217346;">6</div><div class="t" style="left:10.20px;top:359.82px;font-size:14.40px;color:#333;">7</div><div class="t" style="left:10.20px;top:380.46px;font-size:14.40px;color:#333;">8</div><div class="t" style="left:10.20px;top:401.10px;font-size:14.40px;color:#333;">9</div><div class="t" style="left:6.20px;top:421.74px;font-size:14.40px;color:#333;">10</div><div class="t" style="left:6.70px;top:442.38px;font-size:14.40px;color:#333;">11</div><div class="t" style="left:6.20px;top:463.02px;font-size:14.40px;color:#333;">12</div><div class="t" style="left:6.20px;top:483.66px;font-size:14.40px;color:#333;">13</div><div class="t" style="left:6.20px;top:504.30px;font-size:14.40px;color:#333;">14</div><div class="t" style="left:6.20px;top:524.94px;font-size:14.40px;color:#333;">15</div><div class="t" style="left:6.20px;top:545.58px;font-size:14.40px;color:#333;">16</div><div class="t" style="left:6.20px;top:566.22px;font-size:14.40px;color:#333;">17</div><div class="t" style="left:6.20px;top:586.86px;font-size:14.40px;color:#333;">18</div><div class="t" style="left:6.20px;top:607.50px;font-size:14.40px;color:#333;">19</div><div class="t" style="left:6.20px;top:628.14px;font-size:14.40px;color:#333;">20</div><div class="t" style="left:6.20px;top:648.78px;font-size:14.40px;color:#333;">21</div><div class="t" style="left:6.20px;top:669.42px;font-size:14.40px;color:#333;">22</div><div class="t" style="left:6.20px;top:690.06px;font-size:14.40px;color:#333;">23</div><div class="t" style="left:6.20px;top:710.70px;font-size:14.40px;color:#333;">24</div><div class="t" style="left:6.20px;top:731.34px;font-size:14.40px;color:#333;">25</div><div class="t" style="left:6.20px;top:751.98px;font-size:14.40px;color:#333;">26</div><div class="t" style="left:6.20px;top:772.62px;font-size:14.40px;color:#333;">27</div><div class="t" style="left:6.20px;top:793.26px;font-size:14.40px;color:#333;">28</div><div class="t" style="left:6.20px;top:813.90px;font-size:14.40px;color:#333;">29</div><div class="r" style="left:28.50px;top:296.82px;width:214.00px;height:309.10px;background:#ffffff;"></div><div class="r" style="left:28.50px;top:275.68px;width:214.00px;height:20.64px;background:#d9e1f2;"></div><div class="r" style="left:28.50px;top:296.32px;width:214.00px;height:1.50px;background:#b4c6e7;"></div><div class="r" style="left:28.50px;top:605.92px;width:214.00px;height:21.64px;background:#d9e1f2;"></div><div class="r" style="left:28.50px;top:605.92px;width:214.00px;height:1.00px;background:#8ea9db;"></div><div class="t" style="left:32.00px;top:277.74px;font-size:13.17px;color:#000;font-weight:bold;transform:scaleX(1.010);">Category</div><div class="t" style="left:134.00px;top:277.74px;font-size:13.17px;color:#000;font-weight:bold;transform:scaleX(1.053);">Sum of Amount</div><div class="r" style="left:112.80px;top:278.00px;width:17.70px;height:17.50px;background:#f7f8fb;border:1px solid #a8a8a8;box-sizing:border-box;border-radius:1.5px;"></div><svg class="r" style="left:112.8px;top:278px;" width="18" height="18" viewBox="0 0 18 18"><path d="M3 10 H9 L6 13.2 Z" fill="#555"/><path d="M12.2 4.5 V10.5" stroke="#666" stroke-width="1.1"/><circle cx="12.2" cy="11" r="1" fill="#555"/></svg><div class="t" style="left:32.30px;top:298.38px;font-size:13.44px;color:#000;">Food</div><div class="t" style="left:190.90px;top:298.38px;font-size:13.44px;color:#000;">$28,100</div><div class="t" style="left:32.30px;top:319.02px;font-size:13.44px;color:#000;transform:scaleX(1.035);">Travel</div><div class="t" style="left:198.50px;top:319.02px;font-size:13.44px;color:#000;">$5,000</div><div class="t" style="left:32.30px;top:339.66px;font-size:13.44px;color:#000;transform:scaleX(1.049);">Healthcare</div><div class="t" style="left:198.50px;top:339.66px;font-size:13.44px;color:#000;">$3,000</div><div class="t" style="left:32.30px;top:360.30px;font-size:13.44px;color:#000;transform:scaleX(1.077);">Entertainment</div><div class="t" style="left:198.50px;top:360.30px;font-size:13.44px;color:#000;">$2,800</div><div class="t" style="left:32.30px;top:380.94px;font-size:13.44px;color:#000;transform:scaleX(1.016);">Housing</div><div class="t" style="left:198.50px;top:380.94px;font-size:13.44px;color:#000;">$2,000</div><div class="t" style="left:32.30px;top:401.58px;font-size:13.44px;color:#000;transform:scaleX(1.007);">Shopping</div><div class="t" style="left:198.50px;top:401.58px;font-size:13.44px;color:#000;">$1,500</div><div class="t" style="left:32.30px;top:422.22px;font-size:13.44px;color:#000;transform:scaleX(1.088);">Transportation</div><div class="t" style="left:198.50px;top:422.22px;font-size:13.44px;color:#000;">$1,000</div><div class="t" style="left:32.30px;top:442.86px;font-size:13.44px;color:#000;transform:scaleX(1.049);">Education</div><div class="t" style="left:209.50px;top:442.86px;font-size:13.44px;color:#000;transform:scaleX(1.007);">$525</div><div class="t" style="left:32.30px;top:463.50px;font-size:13.44px;color:#000;transform:scaleX(1.104);">Utilities</div><div class="t" style="left:209.50px;top:463.50px;font-size:13.44px;color:#000;transform:scaleX(1.007);">$150</div><div class="t" style="left:32.30px;top:484.14px;font-size:13.44px;color:#000;transform:scaleX(1.030);">Home Goods</div><div class="t" style="left:209.50px;top:484.14px;font-size:13.44px;color:#000;transform:scaleX(1.007);">$150</div><div class="t" style="left:32.30px;top:504.78px;font-size:13.44px;color:#000;transform:scaleX(0.988);">Fitness</div><div class="t" style="left:209.50px;top:504.78px;font-size:13.44px;color:#000;transform:scaleX(1.007);">$100</div><div class="t" style="left:32.30px;top:525.42px;font-size:13.44px;color:#000;transform:scaleX(0.994);">Pet Care</div><div class="t" style="left:209.50px;top:525.42px;font-size:13.44px;color:#000;transform:scaleX(1.007);">$100</div><div class="t" style="left:32.30px;top:546.06px;font-size:13.44px;color:#000;transform:scaleX(1.052);">Charity</div><div class="t" style="left:209.50px;top:546.06px;font-size:13.44px;color:#000;transform:scaleX(1.007);">$100</div><div class="t" style="left:32.30px;top:566.70px;font-size:13.44px;color:#000;transform:scaleX(1.008);">Personal Care</div><div class="t" style="left:217.20px;top:566.70px;font-size:13.44px;color:#000;">$50</div><div class="t" style="left:32.30px;top:587.34px;font-size:13.44px;color:#000;transform:scaleX(1.055);">Gifts</div><div class="t" style="left:217.20px;top:587.34px;font-size:13.44px;color:#000;">$50</div><div class="t" style="left:32.00px;top:607.98px;font-size:13.17px;color:#000;font-weight:bold;transform:scaleX(1.026);">Grand Total</div><div class="t" style="left:189.50px;top:607.98px;font-size:13.17px;color:#000;font-weight:bold;transform:scaleX(1.048);">$44,625</div><div class="r" style="left:130.00px;top:337.10px;width:114.00px;height:22.14px;border:2px solid #217346;box-sizing:border-box;"></div><div class="r" style="left:241.00px;top:356.74px;width:5.00px;height:5.00px;background:#217346;border:1px solid #fff;box-sizing:border-box;"></div><div class="r" style="left:381.80px;top:377.00px;width:516.50px;height:309.50px;background:#fff;border:1px solid #d9d9d9;box-sizing:border-box;"></div><div class="r" style="left:393.00px;top:385.30px;width:87.70px;height:18.50px;background:linear-gradient(#e6e6e6,#c9c9c9);border-right:1px solid #bbb;border-bottom:1px solid #aaa;box-sizing:border-box;"></div><div class="t" style="left:396.50px;top:385.40px;font-size:10.97px;color:#111;transform:scaleX(1.031);">Sum of Amount</div><div class="t" style="left:620.00px;top:417.82px;font-size:17.56px;color:#595959;transform:scaleX(1.027);">Total</div><svg class="r" style="left:0px;top:0px;" width="900" height="700" viewBox="0 0 900 700"><path d="M584.1 564.3 L584.10 458.30 A106.0 106.0 0 1 1 506.97 637.01 Z" fill="#4472C4" stroke="#fff" stroke-width="2" stroke-linejoin="round"/><path d="M584.1 564.3 L506.97 637.01 A106.0 106.0 0 0 1 478.24 569.80 Z" fill="#ED7D31" stroke="#fff" stroke-width="2" stroke-linejoin="round"/><path d="M584.1 564.3 L478.24 569.80 A106.0 106.0 0 0 1 485.29 525.92 Z" fill="#A5A5A5" stroke="#fff" stroke-width="2" stroke-linejoin="round"/><path d="M584.1 564.3 L485.29 525.92 A106.0 106.0 0 0 1 507.61 490.91 Z" fill="#FFC000" stroke="#fff" stroke-width="2" stroke-linejoin="round"/><path d="M584.1 564.3 L507.61 490.91 A106.0 106.0 0 0 1 531.02 472.55 Z" fill="#5B9BD5" stroke="#fff" stroke-width="2" stroke-linejoin="round"/><path d="M584.1 564.3 L531.02 472.55 A106.0 106.0 0 0 1 551.43 463.46 Z" fill="#70AD47" stroke="#fff" stroke-width="2" stroke-linejoin="round"/><path d="M584.1 564.3 L551.43 463.46 A106.0 106.0 0 0 1 565.91 459.87 Z" fill="#264478" stroke="#fff" stroke-width="2" stroke-linejoin="round"/><path d="M584.1 564.3 L565.91 459.87 A106.0 106.0 0 0 1 573.67 458.81 Z" fill="#9E480E" stroke="#fff" stroke-width="2" stroke-linejoin="round"/><path d="M584.1 564.3 L573.67 458.81 A106.0 106.0 0 0 1 575.90 458.62 Z" fill="#636363" stroke="#fff" stroke-width="2" stroke-linejoin="round"/><path d="M584.1 564.3 L575.90 458.62 A106.0 106.0 0 0 1 578.13 458.47 Z" fill="#997300" stroke="#fff" stroke-width="2" stroke-linejoin="round"/><path d="M584.1 564.3 L578.13 458.47 A106.0 106.0 0 0 1 579.62 458.39 Z" fill="#255E91" stroke="#fff" stroke-width="2" stroke-linejoin="round"/><path d="M584.1 564.3 L579.62 458.39 A106.0 106.0 0 0 1 581.12 458.34 Z" fill="#43682B" stroke="#fff" stroke-width="2" stroke-linejoin="round"/><path d="M584.1 564.3 L581.12 458.34 A106.0 106.0 0 0 1 582.61 458.31 Z" fill="#698ED0" stroke="#fff" stroke-width="2" stroke-linejoin="round"/><path d="M584.1 564.3 L582.61 458.31 A106.0 106.0 0 0 1 583.35 458.30 Z" fill="#F1975A" stroke="#fff" stroke-width="2" stroke-linejoin="round"/><path d="M584.1 564.3 L583.35 458.30 A106.0 106.0 0 0 1 584.10 458.30 Z" fill="#B7B7B7" stroke="#fff" stroke-width="2" stroke-linejoin="round"/></svg><div class="r" style="left:787.00px;top:470.30px;width:99.50px;height:18.70px;background:linear-gradient(#e6e6e6,#c9c9c9);border-right:1px solid #bbb;border-bottom:1px solid #aaa;box-sizing:border-box;"></div><div class="t" style="left:790.00px;top:470.70px;font-size:10.97px;color:#111;transform:scaleX(0.975);">Category</div><svg class="r" style="left:870px;top:475px;" width="16" height="10" viewBox="0 0 16 10"><path d="M3.5 2.5 H11.5 L7.5 6.5 Z" fill="#222"/></svg><div class="r" style="left:793.20px;top:498.90px;width:6.00px;height:6.00px;background:#4472C4;"></div><div class="t" style="left:803.00px;top:491.90px;font-size:11.25px;color:#595959;transform:scaleX(1.020);">Food</div><div class="r" style="left:793.20px;top:523.07px;width:6.00px;height:6.00px;background:#ED7D31;"></div><div class="t" style="left:803.00px;top:516.07px;font-size:11.25px;color:#595959;transform:scaleX(1.036);">Travel</div><div class="r" style="left:793.20px;top:547.24px;width:6.00px;height:6.00px;background:#A5A5A5;"></div><div class="t" style="left:803.00px;top:540.24px;font-size:11.25px;color:#595959;transform:scaleX(1.041);">Healthcare</div><div class="r" style="left:793.20px;top:571.41px;width:6.00px;height:6.00px;background:#FFC000;"></div><div class="t" style="left:803.00px;top:564.41px;font-size:11.25px;color:#595959;transform:scaleX(1.090);">Entertainment</div><div class="r" style="left:793.20px;top:595.58px;width:6.00px;height:6.00px;background:#5B9BD5;"></div><div class="t" style="left:803.00px;top:588.58px;font-size:11.25px;color:#595959;transform:scaleX(1.022);">Housing</div><div class="r" style="left:793.20px;top:619.75px;width:6.00px;height:6.00px;background:#70AD47;"></div><div class="t" style="left:803.00px;top:612.75px;font-size:11.25px;color:#595959;transform:scaleX(1.036);">Shopping</div><div class="r" style="left:793.20px;top:643.92px;width:6.00px;height:6.00px;background:#264478;"></div><div class="t" style="left:803.00px;top:636.92px;font-size:11.25px;color:#595959;transform:scaleX(1.084);">Transportation</div><div class="r" style="left:1253.00px;top:215.00px;width:21.00px;height:614.00px;background:#f0f0f0;"></div><div class="r" style="left:1255.50px;top:217.20px;width:16.10px;height:15.40px;background:#fff;border:1px solid #ababab;box-sizing:border-box;"></div><div class="r" style="left:1255.50px;top:233.50px;width:16.10px;height:324.00px;background:#fff;border:1px solid #9a9a9a;box-sizing:border-box;"></div><div class="r" style="left:1255.50px;top:813.80px;width:16.10px;height:15.20px;background:#fff;border:1px solid #ababab;box-sizing:border-box;"></div><svg class="r" style="left:1253px;top:215px;" width="21" height="614" viewBox="0 0 21 614"><path d="M6.3 11.5 H14.7 L10.5 7 Z" fill="#222"/><path d="M6.3 604.5 H14.7 L10.5 609 Z" fill="#222"/></svg><div class="r" style="left:1274.00px;top:213.00px;width:376.00px;height:641.00px;background:#e6e6e6;"></div><div class="r" style="left:1273.80px;top:215.00px;width:1.00px;height:637.00px;background:#c6c6c6;"></div><div class="t" style="left:1288.00px;top:230.52px;font-size:23.32px;color:#3a3a3a;transform:scaleX(0.937);">PivotTable Fields</div><svg class="r" style="left:1560px;top:225px;" width="90" height="30" viewBox="0 0 90 30"><path d="M14 10 L22 17.5 L30 10" fill="none" stroke="#444" stroke-width="1.4"/><path d="M60.5 9 L71.5 20 M71.5 9 L60.5 20" fill="none" stroke="#444" stroke-width="1.4"/></svg><div class="t" style="left:1288.50px;top:268.83px;font-size:12.89px;color:#262626;transform:scaleX(1.013);">Choose fields to add to report:</div><div class="r" style="left:1590.00px;top:263.40px;width:47.80px;height:29.50px;background:#fff;border:1px solid #ababab;box-sizing:border-box;"></div><svg class="r" style="left:1590px;top:263.4px;" width="48" height="30" viewBox="0 0 48 30"><rect x="16.90" y="7.60" width="3.8" height="4" rx="0.6" fill="#999" transform="rotate(30 18.80 14.90)"/><rect x="16.90" y="7.60" width="3.8" height="4" rx="0.6" fill="#999" transform="rotate(90 18.80 14.90)"/><rect x="16.90" y="7.60" width="3.8" height="4" rx="0.6" fill="#999" transform="rotate(150 18.80 14.90)"/><rect x="16.90" y="7.60" width="3.8" height="4" rx="0.6" fill="#999" transform="rotate(210 18.80 14.90)"/><rect x="16.90" y="7.60" width="3.8" height="4" rx="0.6" fill="#999" transform="rotate(270 18.80 14.90)"/><rect x="16.90" y="7.60" width="3.8" height="4" rx="0.6" fill="#999" transform="rotate(330 18.80 14.90)"/><circle cx="18.799999999999955" cy="14.900000000000034" r="5.3" fill="#999"/><circle cx="18.799999999999955" cy="14.900000000000034" r="2.2" fill="#fff"/><path d="M34.8 11.8 H43 L38.9 16.2 Z" fill="#111"/></svg><div class="r" style="left:1288.40px;top:307.40px;width:349.40px;height:25.10px;background:#fff;border:1px solid #c6c6c6;box-sizing:border-box;"></div><div class="t" style="left:1295.50px;top:309.72px;font-size:12.35px;color:#767676;transform:scaleX(0.949);">Search</div><svg class="r" style="left:1610px;top:305px;" width="30" height="30" viewBox="0 0 30 30"><circle cx="19" cy="11" r="5.2" fill="none" stroke="#333" stroke-width="1.3"/><path d="M15.3 14.7 L8.5 21.5" stroke="#333" stroke-width="1.5"/></svg><div class="r" style="left:1288.50px;top:350.00px;width:349.30px;height:184.50px;background:#fff;border:1px solid #ababab;box-sizing:border-box;"></div><div class="t" style="left:1312.60px;top:353.73px;font-size:12.89px;color:#262626;transform:scaleX(1.026);">Date</div><div class="t" style="left:1312.60px;top:376.98px;font-size:12.89px;color:#262626;transform:scaleX(1.016);">Item</div><div class="t" style="left:1312.60px;top:400.23px;font-size:12.89px;color:#111;font-weight:bold;transform:scaleX(0.957);">Category</div><div class="t" style="left:1312.60px;top:423.48px;font-size:12.89px;color:#111;font-weight:bold;transform:scaleX(1.016);">Amount</div><div class="t" style="left:1312.60px;top:446.73px;font-size:12.89px;color:#262626;transform:scaleX(1.005);">Paid With</div><div class="t" style="left:1312.60px;top:469.98px;font-size:12.89px;color:#262626;transform:scaleX(0.986);">Comments</div><svg class="r" style="left:0px;top:0px;pointer-events:none;" width="1650" height="872" viewBox="0 0 1650 872"><rect x="1292.5" y="354.20" width="13" height="13" fill="#fff" stroke="#8f8f8f" stroke-width="1"/><rect x="1292.5" y="377.45" width="13" height="13" fill="#fff" stroke="#8f8f8f" stroke-width="1"/><rect x="1292" y="400.20" width="14" height="14" fill="#217346"/><path d="M1295.5 407.20 L1298.3 409.90 L1303 404.20" fill="none" stroke="#fff" stroke-width="1.1"/><rect x="1292" y="423.45" width="14" height="14" fill="#217346"/><path d="M1295.5 430.45 L1298.3 433.15 L1303 427.45" fill="none" stroke="#fff" stroke-width="1.1"/><rect x="1292.5" y="447.20" width="13" height="13" fill="#fff" stroke="#8f8f8f" stroke-width="1"/><rect x="1292.5" y="470.45" width="13" height="13" fill="#fff" stroke="#8f8f8f" stroke-width="1"/></svg><div class="t" style="left:1291.70px;top:493.23px;font-size:12.89px;color:#262626;transform:scaleX(0.953);">More Tables...</div><div class="r" style="left:1290.00px;top:551.00px;width:351.00px;height:1.00px;background:repeating-linear-gradient(90deg,#bdbdbd 0 1px,transparent 1px 3px);"></div><div class="t" style="left:1292.30px;top:554.93px;font-size:12.89px;color:#262626;">Drag fields between areas below:</div><div class="r" style="left:1464.30px;top:591.00px;width:1.00px;height:204.50px;background:#c6c6c6;"></div><div class="r" style="left:1291.00px;top:692.00px;width:348.00px;height:1.00px;background:#c6c6c6;"></div><div class="r" style="left:1291.20px;top:612.90px;width:167.10px;height:73.30px;background:#fff;"></div><div class="r" style="left:1466.80px;top:612.90px;width:171.90px;height:73.30px;background:#fff;"></div><div class="r" style="left:1291.20px;top:721.40px;width:167.10px;height:74.00px;background:#fff;"></div><div class="r" style="left:1466.80px;top:721.40px;width:171.90px;height:74.00px;background:#fff;"></div><svg class="r" style="left:0px;top:0px;" width="1650" height="872" viewBox="0 0 1650 872"><path d="M1295.5 593.5 H1308 L1303.5 599 V606 H1300 V599 Z" fill="#8a8a8a"/>
<g fill="#9a9a9a"><rect x="1473" y="594" width="1.4" height="10"/><rect x="1475.5" y="594" width="1.4" height="10"/><rect x="1478" y="594" width="1.4" height="10"/><rect x="1480.5" y="594" width="1.4" height="10"/></g>
<g fill="#b0b0b0"><rect x="1296.5" y="701.5" width="11" height="2.5"/><rect x="1296.5" y="704.8" width="11" height="2.5"/><rect x="1296.5" y="708.1" width="11" height="2.5"/></g>
<path d="M1482.5 702.5 H1472.8 L1477.5 707 L1472.8 711.7 H1482.5" fill="none" stroke="#8a8a8a" stroke-width="1.3"/></svg><div class="t" style="left:1315.40px;top:591.23px;font-size:12.89px;color:#262626;transform:scaleX(0.957);">Filters</div><div class="t" style="left:1490.80px;top:591.23px;font-size:12.89px;color:#262626;transform:scaleX(0.992);">Columns</div><div class="t" style="left:1315.90px;top:699.23px;font-size:12.89px;color:#262626;transform:scaleX(0.913);">Rows</div><div class="t" style="left:1490.80px;top:699.23px;font-size:12.89px;color:#262626;transform:scaleX(0.974);">Values</div><div class="r" style="left:1292.30px;top:723.20px;width:164.70px;height:22.20px;background:#fff;border:1px solid #c6c6c6;box-sizing:border-box;"></div><div class="r" style="left:1468.00px;top:723.20px;width:169.60px;height:22.20px;background:#fff;border:1px solid #c6c6c6;box-sizing:border-box;"></div><div class="t" style="left:1300.00px;top:724.83px;font-size:12.89px;color:#262626;transform:scaleX(0.983);">Category</div><div class="t" style="left:1475.50px;top:724.53px;font-size:12.89px;color:#262626;transform:scaleX(1.009);">Sum of Amount</div><svg class="r" style="left:0px;top:0px;" width="1650" height="872" viewBox="0 0 1650 872"><path d="M1438.5 732.5 H1446 L1442.2 736.5 Z" fill="#222"/><path d="M1618.5 732.5 H1626 L1622.2 736.5 Z" fill="#222"/></svg><div class="r" style="left:1295.00px;top:823.40px;width:13.70px;height:13.50px;background:#fff;border:1px solid #8f8f8f;box-sizing:border-box;"></div><div class="t" style="left:1316.00px;top:820.23px;font-size:12.89px;color:#262626;transform:scaleX(0.992);">Defer Layout Update</div><div class="r" style="left:1585.00px;top:817.00px;width:53.30px;height:26.00px;background:#ffffff;border:1px solid #d9d9d9;box-sizing:border-box;"></div><div class="t" style="left:1591.00px;top:820.53px;font-size:12.62px;color:#c2c2c2;transform:scaleX(1.034);">Update</div><div class="r" style="left:0.00px;top:829.00px;width:1274.00px;height:25.50px;background:#e6e6e6;"></div><div class="r" style="left:0.00px;top:829.00px;width:1253.00px;height:1.00px;background:#ababab;"></div><div class="r" style="left:89.00px;top:829.00px;width:68.00px;height:23.00px;background:#fff;border-left:1px solid #c6c6c6;border-right:1px solid #c6c6c6;box-sizing:border-box;"></div><div class="r" style="left:89.00px;top:849.50px;width:68.00px;height:2.20px;background:#217346;"></div><div class="t" style="left:99.40px;top:828.54px;font-size:13.17px;color:#217346;font-weight:bold;transform:scaleX(1.053);">Sheet1</div><div class="t" style="left:169.70px;top:828.54px;font-size:13.44px;color:#444;transform:scaleX(1.038);">Expenses Spreadsheet</div><div class="r" style="left:327.00px;top:835.00px;width:1.00px;height:15.00px;background:#9c9c9c;"></div><svg class="r" style="left:0px;top:829px;" width="1274" height="26" viewBox="0 0 1274 26"><path d="M29 6.5 L25 11 L29 15.5 Z" fill="#c2c2c2"/><path d="M49 6.5 L53 11 L49 15.5 Z" fill="#c2c2c2"/>
<circle cx="364.4" cy="13" r="8" fill="none" stroke="#777" stroke-width="1.2"/><path d="M360 13 H368.8 M364.4 8.6 V17.4" stroke="#555" stroke-width="1.3"/>
<g fill="#aaa"><rect x="762.5" y="6.5" width="2.2" height="2.2"/><rect x="762.5" y="11" width="2.2" height="2.2"/><rect x="762.5" y="15.5" width="2.2" height="2.2"/></g></svg><div class="r" style="left:778.00px;top:833.50px;width:475.00px;height:16.00px;background:#f0f0f0;"></div><div class="r" style="left:778.00px;top:833.50px;width:16.50px;height:16.00px;background:#fff;border:1px solid #ababab;box-sizing:border-box;"></div><div class="r" style="left:794.00px;top:833.50px;width:413.30px;height:16.00px;background:#fff;border:1px solid #9a9a9a;box-sizing:border-box;"></div><div class="r" style="left:1236.40px;top:833.50px;width:16.30px;height:16.00px;background:#fff;border:1px solid #ababab;box-sizing:border-box;"></div><svg class="r" style="left:770px;top:829px;" width="490" height="26" viewBox="0 0 490 26"><path d="M16.5 9 V17 L12.5 13 Z" fill="#222"/><path d="M474 9 V17 L478 13 Z" fill="#222"/></svg><div class="r" style="left:0.00px;top:854.50px;width:1650.00px;height:17.50px;background:#f3f3f3;"></div><div class="r" style="left:0.00px;top:854.00px;width:1650.00px;height:1.00px;background:#d9d9d9;"></div><div class="t" style="left:12.00px;top:857.03px;font-size:12.62px;color:#444;transform:scaleX(0.852);">Ready</div><svg class="r" style="left:0px;top:854px;" width="1650" height="18" viewBox="0 0 1650 18"><g transform="translate(0,2.5)"><g fill="#666"><circle cx="68.5" cy="4.5" r="2.6"/><rect x="71" y="2.8" width="7" height="2.2"/></g>
<g fill="none" stroke="#666" stroke-width="1"><rect x="65.5" y="6.5" width="12.5" height="9"/><path d="M65.5 9.5 H78 M65.5 12.5 H78 M69.5 6.5 V15.5 M73.5 6.5 V15.5"/></g>
<g fill="none" stroke="#555" stroke-width="1.3"><path d="M103.5 4.5 A5.5 5.5 0 1 0 104.5 15"/><path d="M106 1.5 V8 M104 6 L106 8 L108 6"/><path d="M109.5 8.5 A3 3 0 1 1 112.5 12 V14.5"/></g></g>
<rect x="1331.6" y="0.5" width="42" height="17.5" fill="#c8c8c8"/>
<g fill="none" stroke="#555" stroke-width="1"><rect x="1345.5" y="4.5" width="13" height="13"/><path d="M1345.5 8.5 H1358.5 M1345.5 12.5 H1358.5 M1349.5 4.5 V17.5 M1353.5 4.5 V17.5 M1357 4.5 V17.5"/>
<rect x="1388.5" y="4.5" width="13" height="13"/><rect x="1391.5" y="7.5" width="7" height="7.5" stroke-width="0.8"/><path d="M1393 10 H1397 M1393 12.5 H1397" stroke-width="0.8"/>
<path d="M1431.5 18 V4.5 H1445.5 V18 M1435.5 4.5 V10 H1438.5 V4.5 M1441.5 4.5 V10"/></g>
<path d="M1466 11.5 H1474" stroke="#444" stroke-width="1.3"/>
<path d="M1480 11.5 H1587" stroke="#666" stroke-width="1"/>
<rect x="1531.5" y="5" width="3.5" height="13" fill="#444"/>
<path d="M1592 11.5 H1600 M1596 7.5 V15.5" stroke="#444" stroke-width="1.3"/></svg><div class="t" style="left:1615.00px;top:856.72px;font-size:12.07px;color:#444;transform:scaleX(0.874);">100%</div><div class="t" style="left:118.50px;top:857.03px;font-size:12.62px;color:#444;transform:scaleX(0.859);">Accessibility: Unavailable</div></body></html>
